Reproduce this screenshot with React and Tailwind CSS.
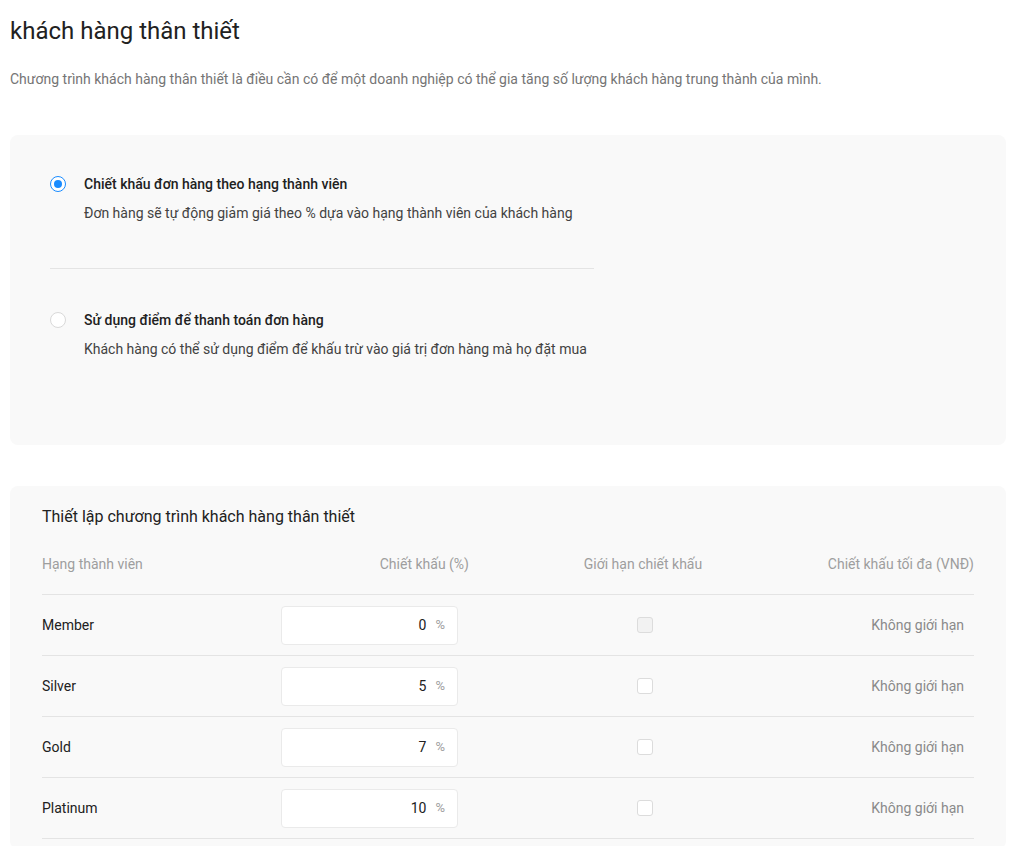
import React from 'react';

const tiers = [
  { name: 'Member', value: '0', disabled: true },
  { name: 'Silver', value: '5' },
  { name: 'Gold', value: '7' },
  { name: 'Platinum', value: '10' },
];

const Radio = ({ checked }) =>
  checked ? (
    <span className="flex size-4 shrink-0 items-center justify-center rounded-full border border-[#1a8cff] bg-white">
      <span className="block size-2 rounded-full bg-[#1a8cff]" />
    </span>
  ) : (
    <span className="block size-4 shrink-0 rounded-full border border-[#d9d9d9] bg-white" />
  );

const Option = ({ checked, title, desc }) => (
  <div className="flex gap-[18px]">
    <div className="pt-[1px]">
      <Radio checked={checked} />
    </div>
    <div className="flex flex-col">
      <p className="text-sm font-medium leading-[18px] text-[#212121]">{title}</p>
      <p className="mt-[11px] text-sm leading-[18px] text-[#424242]">{desc}</p>
    </div>
  </div>
);

export default function App() {
  return (
    <div className="min-h-[846px] bg-white pl-[10px] pr-[6px] pt-[16px] font-['Roboto',sans-serif]">
      {/* Header */}
      <h1 className="text-[24px] leading-[30px] text-[#212121]">khách hàng thân thiết</h1>
      <p className="mt-[24px] text-sm leading-[18px] text-[#757575]">
        Chương trình khách hàng thân thiết là điều cần có để một doanh nghiệp có thể gia tăng số lượng khách hàng trung thành của mình.
      </p>

      {/* Program type */}
      <div className="mt-[47px] h-[310px] rounded-lg bg-[#f9f9f9] px-[40px] pt-[40px]">
        <div className="w-[544px]">
          <Option
            checked
            title="Chiết khấu đơn hàng theo hạng thành viên"
            desc="Đơn hàng sẽ tự động giảm giá theo % dựa vào hạng thành viên của khách hàng"
          />
          <div className="mt-[46px] mb-[42px] h-px bg-[#e4e4e4]" />
          <Option
            title="Sử dụng điểm để thanh toán đơn hàng"
            desc="Khách hàng có thể sử dụng điểm để khấu trừ vào giá trị đơn hàng mà họ đặt mua"
          />
        </div>
      </div>

      {/* Settings table */}
      <div className="mt-[41px] rounded-lg bg-[#f9f9f9] px-[32px] pt-[21px] pb-[10px]">
        <h2 className="text-base leading-[20px] text-[#212121]">Thiết lập chương trình khách hàng thân thiết</h2>
        <div className="mt-[18px] grid h-[50px] grid-cols-[239px_188px_348px_157px] items-center border-b border-[#e4e4e4] pb-[11px] text-sm text-[#9e9e9e]">
          <span>Hạng thành viên</span>
          <span className="text-right">Chiết khấu (%)</span>
          <span className="text-center">Giới hạn chiết khấu</span>
          <span className="text-right">Chiết khấu tối đa (VNĐ)</span>
        </div>
        {tiers.map((t) => (
          <div
            key={t.name}
            className="grid h-[61px] grid-cols-[239px_188px_348px_157px] items-center border-b border-[#e4e4e4] text-sm"
          >
            <span className="text-[#212121]">{t.name}</span>
            <div className="flex h-[39px] w-[177px] items-center justify-end gap-[9px] rounded border border-[#eaeaea] bg-white pr-[12px]">
              <span className="text-[#212121]">{t.value}</span>
              <span className="text-[13px] text-[#9e9e9e]">%</span>
            </div>
            <div className="flex justify-center pl-[4px]">
              <span
                className={`block size-4 rounded-[3px] border border-[#dcdcdc] ${t.disabled ? 'bg-[#f2f2f2]' : 'bg-white'}`}
              />
            </div>
            <span className="pr-[10px] text-right text-[#8a8a8a]">Không giới hạn</span>
          </div>
        ))}
      </div>
    </div>
  );
}
